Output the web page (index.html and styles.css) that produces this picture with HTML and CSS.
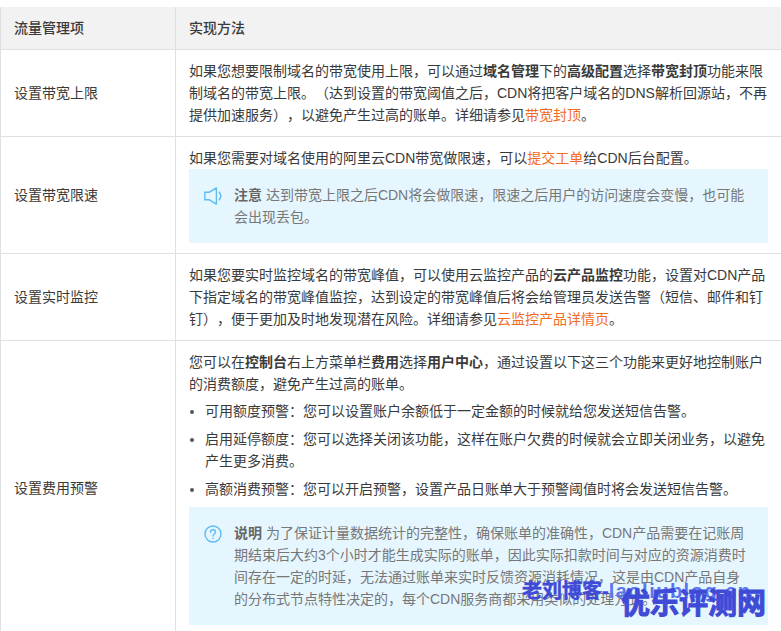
FILE: index.html
```html
<!DOCTYPE html>
<html lang="zh-CN">
<head>
<meta charset="utf-8">
<title>流量管理项</title>
<link rel="stylesheet" href="styles.css">
</head>
<body>
<table class="doc-table">
  <colgroup><col class="col-item"><col class="col-method"></colgroup>
  <thead>
    <tr><th>流量管理项</th><th>实现方法</th></tr>
  </thead>
  <tbody>
    <tr>
      <td>设置带宽上限</td>
      <td>如果您想要限制域名的带宽使用上限，可以通过<b>域名管理</b>下的<b>高级配置</b>选择<b>带宽封顶</b>功能来限制域名的带宽上限。（达到设置的带宽阈值之后，CDN将把客户域名的DNS解析回源站，不再提供加速服务），以避免产生过高的账单。详细请参见<a class="link">带宽封顶</a>。</td>
    </tr>
    <tr>
      <td>设置带宽限速</td>
      <td>
        <p>如果您需要对域名使用的阿里云CDN带宽做限速，可以<a class="link">提交工单</a>给CDN后台配置。</p>
        <div class="note">
          <svg class="note-icon" viewBox="0 0 18 18" fill="none" stroke="#5cbcf2" stroke-width="1.4" stroke-linejoin="round" stroke-linecap="round"><path d="M.8 5.2h4.6L12.4 .9v16.2L5.4 12.8H.8z"/><path d="M15.2 5.2c1.9 2.2 1.9 5.4 0 7.6"/></svg>
          <div class="note-text"><b>注意</b> 达到带宽上限之后CDN将会做限速，限速之后用户的访问速度会变慢，也可能会出现丢包。</div>
        </div>
      </td>
    </tr>
    <tr>
      <td>设置实时监控</td>
      <td>如果您要实时监控域名的带宽峰值，可以使用云监控产品的<b>云产品监控</b>功能，设置对CDN产品下指定域名的带宽峰值监控，达到设定的带宽峰值后将会给管理员发送告警（短信、邮件和钉钉），便于更加及时地发现潜在风险。详细请参见<a class="link">云监控产品详情页</a>。</td>
    </tr>
    <tr>
      <td>设置费用预警</td>
      <td>
        <p>您可以在<b>控制台</b>右上方菜单栏<b>费用</b>选择<b>用户中心</b>，通过设置以下这三个功能来更好地控制账户的消费额度，避免产生过高的账单。</p>
        <ul class="list">
          <li>可用额度预警：您可以设置账户余额低于一定金额的时候就给您发送短信告警。</li>
          <li>启用延停额度：您可以选择关闭该功能，这样在账户欠费的时候就会立即关闭业务，以避免产生更多消费。</li>
          <li>高额消费预警：您可以开启预警，设置产品日账单大于预警阈值时将会发送短信告警。</li>
        </ul>
        <div class="note">
          <svg class="note-icon" viewBox="0 0 18 18" fill="none" stroke="#5cbcf2" stroke-width="1.4" stroke-linecap="round"><circle cx="9" cy="9" r="8"/><path d="M6.5 7.2c0-1.5 1-2.5 2.5-2.5s2.5 1 2.5 2.3c0 2-2.5 1.9-2.5 3.9"/><path d="M9 13.3v.2"/></svg>
          <div class="note-text"><b>说明</b> 为了保证计量数据统计的完整性，确保账单的准确性，CDN产品需要在记账周期结束后大约3个小时才能生成实际的账单，因此实际扣款时间与对应的资源消费时间存在一定的时延，无法通过账单来实时反馈资源消耗情况，这是由CDN产品自身的分布式节点特性决定的，每个CDN服务商都采用类似的处理方式。</div>
        </div>
      </td>
    </tr>
  </tbody>
</table>
<div class="mark mark-small">老刘博客-<span class="mark-latin">laoliublog.cn</span></div>
<div class="mark mark-large">优乐评测网</div>
</body>
</html>
```
FILE: styles.css
```css
html, body {
  margin: 0;
  height: 631px;
  overflow: hidden;
  background: #fff;
}
body {
  position: relative;
  padding-top: 7px;
  box-sizing: border-box;
  font-family: "Liberation Sans", "Noto Sans CJK SC", sans-serif;
  font-size: 14px;
  line-height: 22px;
  color: #3a3a3a;
  text-spacing-trim: space-all;
}
.doc-table {
  width: 781px;
  table-layout: fixed;
  border-collapse: collapse;
}
.col-item { width: 175px; }
.doc-table th,
.doc-table td {
  padding: 10px 13px;
  border: 1px solid #e0e0e0;
  text-align: left;
  vertical-align: middle;
}
.doc-table th:last-child,
.doc-table td:last-child { border-right: 0; }
.doc-table thead th {
  background: #f2f2f2;
  font-weight: 500;
}
.doc-table tr:first-child th { border-top: 0; }
b { font-weight: 700; }
p { margin: 0; }
.link { color: #f26c1f; }
.list {
  margin: 5px 0 7px;
  padding: 0 0 0 16px;
}
.list li { margin-bottom: 6px; }
.list li:last-child { margin-bottom: 0; }
.list li::marker { color: #555; font-size: 14px; }
.note {
  display: flex;
  gap: 12px;
  padding: 15px;
  background: #e5f6ff;
  color: #777;
}
.note-icon {
  flex: none;
  width: 18px;
  height: 18px;
  margin-top: 3px;
}
.note-text { flex: 1; }
.note-text b { color: #666; }
.mark {
  position: absolute;
  font-weight: 700;
  color: #3f4ad6;
  white-space: nowrap;
}
.mark-small {
  left: 522px;
  top: 579px;
  font-size: 20px;
  line-height: 24px;
  -webkit-text-stroke: 0.5px #3f4ad6;
}
.mark-latin {
  color: #5a78ee;
  letter-spacing: 1.5px;
  -webkit-text-stroke: 0;
}
.mark-large {
  left: 621px;
  top: 586px;
  font-size: 29px;
  line-height: 36px;
  -webkit-text-stroke: 1px #3f4ad6;
}
```
